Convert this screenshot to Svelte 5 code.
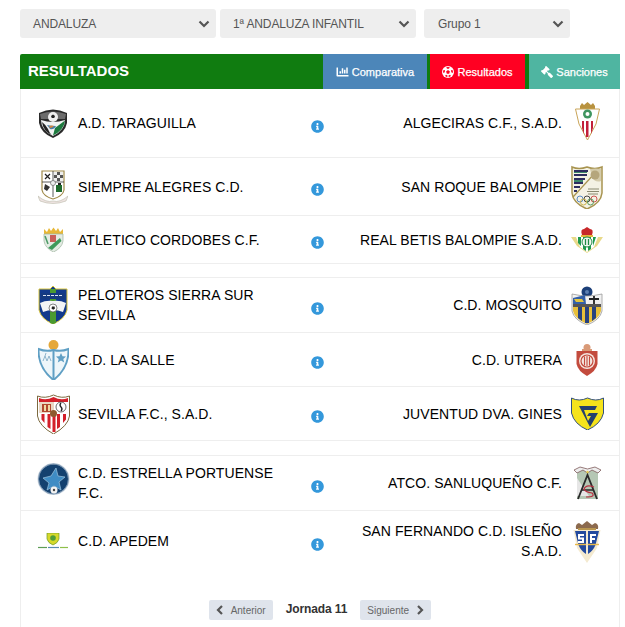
<script>
  const groups = [
    {
      gap: 14,
      rows: [
        { h: 69, home: 'A.D. TARAGUILLA', homeLogo: 'taraguilla', away: 'ALGECIRAS C.F., S.A.D.', awayLogo: 'algeciras' },
        { h: 58, home: 'SIEMPRE ALEGRES C.D.', homeLogo: 'siempre', away: 'SAN ROQUE BALOMPIE', awayLogo: 'sanroque' },
        { h: 48, home: 'ATLETICO CORDOBES C.F.', homeLogo: 'cordobes', away: 'REAL BETIS BALOMPIE S.A.D.', awayLogo: 'betis' }
      ]
    },
    {
      gap: 15,
      rows: [
        { h: 55, home: 'PELOTEROS SIERRA SUR SEVILLA', homeLogo: 'peloteros', away: 'C.D. MOSQUITO', awayLogo: 'mosquito' },
        { h: 54, home: 'C.D. LA SALLE', homeLogo: 'lasalle', away: 'C.D. UTRERA', awayLogo: 'utrera' },
        { h: 54, home: 'SEVILLA F.C., S.A.D.', homeLogo: 'sevilla', away: 'JUVENTUD DVA. GINES', awayLogo: 'gines' }
      ]
    },
    {
      gap: 0,
      rows: [
        { h: 55, home: 'C.D. ESTRELLA PORTUENSE F.C.', homeLogo: 'estrella', away: 'ATCO. SANLUQUEÑO C.F.', awayLogo: 'sanluqueno' },
        { h: 60, last: true, home: 'C.D. APEDEM', homeLogo: 'apedem', away: 'SAN FERNANDO C.D. ISLEÑO S.A.D.', awayLogo: 'sanfernando' }
      ]
    }
  ];
</script>

{#snippet logo(id)}
  {#if id === 'taraguilla'}
    <svg width="30" height="30" viewBox="0 0 30 30">
      <path d="M1 5 Q15 -2 29 5 V15 Q27 25 15 30 Q3 25 1 15Z" fill="#2a2a2a"/>
      <path d="M2 6 Q15 1 28 6 L27 11 H3Z" fill="#6c6c6c"/>
      <circle cx="15" cy="9" r="5" fill="#efefef"/>
      <path d="M13 8l2-1.500 2 1.500-.8 2h-2.400z" fill="#222"/>
      <path d="M3 12 Q15 16 27 12 Q27 22 15 28 Q3 22 3 12Z" fill="#f1f3f3"/>
      <path d="M15 27.500 Q26 22 27 12.500 L17 20Z" fill="#1c7a3e"/>
      <path d="M4 14 Q8 17 10 21 Q12 26 14 27 Q5 23 4 14Z" fill="#222"/>
      <path d="M9 17 Q13 18 18 18 Q16 22 12 21Z" fill="#4a7fa8"/>
      <path d="M11 18 Q14 17 16 18 Q14 20 12 20Z" fill="#d2823e"/>
    </svg>
  {:else if id === 'algeciras'}
    <svg class="up2" width="25" height="38" viewBox="0 0 25 38">
      <path d="M5 4 L7 1 9 3 12.500 0 16 3 18 1 20 4 V7 H5Z" fill="#b8923f"/>
      <path d="M0.500 7 H24.500 L21 22 12.500 38 4 22Z" fill="#fff" stroke="#c9a458"/>
      <circle cx="12.500" cy="12" r="4.500" fill="#3f9560"/>
      <circle cx="12.500" cy="12" r="2" fill="#fff"/>
      <path d="M5 19 H20 L19 24 12.500 36 6 24Z" fill="#fff"/>
      <path d="M7 19h2v13l-2-6zM11 19h2.500v16H11zM16 19h2v7l-2 6z" fill="#c2203a"/>
    </svg>
  {:else if id === 'siempre'}
    <svg width="30" height="34" viewBox="0 0 30 34">
      <path d="M4 1H26V20Q25 26 15 29Q5 26 4 20Z" fill="#fff" stroke="#a08a4a" stroke-width="1.200"/>
      <path d="M15 1V27M4 12H26" stroke="#333" stroke-width=".8"/>
      <path d="M7 4l5 5M12 4l-5 5" stroke="#222" stroke-width="1.200"/>
      <path d="M16 2h9v9h-9z" fill="#555"/>
      <path d="M16 2h3v3h-3zM22 2h3v3h-3zM19 5h3v3h-3zM16 8h3v3h-3zM22 8h3v3h-3z" fill="#eee"/>
      <path d="M7 14l5 3-3 4-3-2z" fill="#333"/>
      <path d="M18 15h6v7h-6z" fill="#1f6b2e"/>
      <path d="M20 13h3v2h-3z" fill="#222"/>
      <circle cx="15" cy="13" r="2.500" fill="#eee" stroke="#555" stroke-width=".6"/>
      <path d="M0 26Q8 33 15 31Q22 33 30 26L28 31Q15 36 2 31Z" fill="#efe4e2" stroke="#bba" stroke-width=".6"/>
    </svg>
  {:else if id === 'sanroque'}
    <svg width="32" height="44" viewBox="0 0 32 44">
      <path d="M1 2 Q8 5 16 2 Q24 5 31 2 V28 Q30 38 16 44 Q2 38 1 28Z" fill="#f4f2e4" stroke="#a89450" stroke-width="1.500"/>
      <path d="M3 5h14v2H3zM3 9h13v2H3zM3 13h11v2H3zM3 17h9v2H3zM3 21h6v2H3zM3 25h3v2H3z" fill="#2d2d5f"/>
      <path d="M3 7h13v1H3zM3 15h9v2H3z" fill="#3f8a6a"/>
      <path d="M2 32 L24 8" stroke="#a89450" stroke-width="1.200"/>
      <path d="M19 4Q25 3 30 4V16Q24 18 21 12Z" fill="#d4cbab"/>
      <circle cx="24" cy="10" r="4.500" fill="#b5a67c"/>
      <g fill="none" stroke-width=".9">
        <circle cx="9" cy="34" r="3" stroke="#4a7fc0"/>
        <circle cx="16" cy="34" r="3" stroke="#333"/>
        <circle cx="23" cy="34" r="3" stroke="#c44"/>
        <circle cx="12.500" cy="37" r="3" stroke="#c9b040"/>
        <circle cx="19.500" cy="37" r="3" stroke="#4a9050"/>
      </g>
      <path d="M17 24h11M16 26.500h12M17 29h10" stroke="#8a8a70" stroke-width="1"/>
    </svg>
  {:else if id === 'cordobes'}
    <svg width="21" height="25" viewBox="0 0 21 25">
      <path d="M1 7 L1 2 4 5 6 1 8 4 10.500 0.500 13 4 15 1 17 5 20 2 20 7Z" fill="#e8b838"/>
      <path d="M1 7H20V14Q19 21 10.500 25Q2 21 1 14Z" fill="#e4ece4" stroke="#9db39d" stroke-width=".7"/>
      <path d="M7 8h6v7H7z" fill="#c9605a"/>
      <path d="M5 21L17 11l1.500 3L9 23z" fill="#3f9a5b"/>
      <path d="M2 9l3 8" stroke="#4c9b67" stroke-width="1.500"/>
    </svg>
  {:else if id === 'betis'}
    <svg width="32" height="27" viewBox="0 0 32 27">
      <path d="M11 9 Q9 3 13 3 L16 1 19 3 Q23 3 21 9Z" fill="#c8282a"/>
      <path d="M10 9h12v2H10z" fill="#e5b93c"/>
      <path d="M0 11 H32 L26 20 16 27 6 20Z" fill="#e8d98a"/>
      <path d="M5 11 H27 L23 21 16 26 9 21Z" fill="#fff"/>
      <path d="M7 11h3v9l-3-3zM12 11h3v14l-3-2zM17 11h3v12l-3 2zM22 11h3l-3 9z" fill="#1f9a4d"/>
      <circle cx="16" cy="16" r="5" fill="#f4f8f2" stroke="#1f8a45"/>
      <path d="M14.500 13v6M17.500 13v6" stroke="#1f8a45" stroke-width="1.300"/>
    </svg>
  {:else if id === 'peloteros'}
    <svg width="30" height="38" viewBox="0 0 30 38">
      <path d="M1 3 L12 3 15 0 18 3 H29V24Q27 33 15 38Q3 33 1 24Z" fill="#123a8c" stroke="#d8c43c"/>
      <path d="M12 3H18V37L15 38 12 37Z" fill="#4a9a30"/>
      <path d="M3 7h24v6H3z" fill="#153a80"/>
      <path d="M5 9.500h20" stroke="#dfe6f2" stroke-width="1.200" stroke-dasharray="3 1"/>
      <path d="M2 17Q8 14 15 15Q22 14 28 17L25 26Q15 22 5 26Z" fill="#f2f4f6"/>
      <circle cx="15" cy="22" r="4" fill="#fff" stroke="#333" stroke-width=".6"/>
      <path d="M14 20.500h2.500l.500 2-1.800 1.300-1.700-1.300z" fill="#222"/>
    </svg>
  {:else if id === 'mosquito'}
    <svg width="32" height="39" viewBox="0 0 32 39">
      <circle cx="16" cy="6" r="5.500" fill="#1c3f78"/>
      <circle cx="16" cy="6" r="2" fill="#5c7fb0"/>
      <path d="M1 8Q10 10 16 10Q22 10 31 8V25Q29 34 16 39Q3 34 1 25Z" fill="#f2f2f2" stroke="#999" stroke-width=".8"/>
      <path d="M2 12L14 9 15 18H2Z" fill="#3460a8"/>
      <path d="M3 13h8l2 3H5z" fill="#e3c640"/>
      <path d="M17 12 H30 V18 H17Z" fill="#eee"/>
      <path d="M23 10v9M18 13h10" stroke="#222" stroke-width="1.800"/>
      <path d="M2 18h28v3H2z" fill="#555"/>
      <path d="M2 21H30V25Q28 33 16 38Q4 33 2 25Z" fill="#e7bf3a"/>
      <path d="M7 21h4v14l-4-3zM14 21h4v16h-4zM21 21h4v11l-4 3z" fill="#27417e"/>
    </svg>
  {:else if id === 'lasalle'}
    <svg width="31" height="40" viewBox="0 0 31 40">
      <circle cx="15.500" cy="5" r="5" fill="#e5a83a"/>
      <path d="M0.500 9 Q8 12 15.500 10 Q23 12 30.500 9 Q31 28 15.500 40 Q0 28 0.500 9Z" fill="#eef6fa" stroke="#5f9fc4" stroke-width="2"/>
      <path d="M15.500 10V39" stroke="#5f9fc4" stroke-width="2"/>
      <path d="M23 13l1.500 3.300 3.500.300-2.700 2.300.9 3.500-3.200-2-3.200 2 .9-3.500-2.700-2.300 3.500-.300z" fill="#5f9fc4"/>
      <path d="M5 21l2-5 2 5M9 21l2-5 2 5M7 16l1 -3" fill="none" stroke="#85aec6" stroke-width=".9"/>
    </svg>
  {:else if id === 'utrera'}
    <svg width="22" height="32" viewBox="0 0 22 32">
      <circle cx="11" cy="3.500" r="3.500" fill="#d99a78"/>
      <path d="M6 5h10v3H6z" fill="#d99a78"/>
      <path d="M0.500 7H21.500V20Q20 27 11 32Q2 27 .5 20Z" fill="#c34b3d"/>
      <circle cx="11" cy="17" r="8" fill="#f5e6df"/>
      <circle cx="11" cy="17" r="6" fill="none" stroke="#c34b3d" stroke-width="1.200"/>
      <path d="M8.500 12.500v9M11 12v10M13.500 12.500v9" stroke="#c34b3d" stroke-width="1.100"/>
    </svg>
  {:else if id === 'sevilla'}
    <svg width="33" height="40" viewBox="0 0 33 40">
      <path d="M0.500 2Q8 5 16.500 1Q25 5 32.500 2V22Q31 32 16.500 40Q2 32 0.500 22Z" fill="#fff" stroke="#7c6a3f"/>
      <path d="M2 4Q9 7 16.500 3Q24 7 31 4V8H2Z" fill="#d3202a"/>
      <path d="M2 8H17V19H2Z" fill="#e9d7c4"/>
      <path d="M5 10h9v8H5z" fill="#b1482f"/>
      <path d="M7 11h2v6H7zM11 11h2v6h-2z" fill="#f0d9a6"/>
      <circle cx="24" cy="13" r="5" fill="#fff" stroke="#444" stroke-width=".8"/>
      <path d="M24 9q-2 2 0 4t0 4" fill="none" stroke="#222" stroke-width="1.300"/>
      <path d="M3 20H30V23Q29 31 16.500 38Q4 31 3 23Z" fill="#fff"/>
      <path d="M4.500 20h3v9l-3-3.500zM10.500 20h3v15l-3-2zM15.500 20h3v18h-3zM20 20h3v13l-3 2zM26 20h3v5.500l-3 3.500z" fill="#d3202a"/>
      <circle cx="16.500" cy="19.500" r="3.500" fill="#8e5a2e"/>
    </svg>
  {:else if id === 'gines'}
    <svg width="33" height="33" viewBox="0 0 33 33">
      <path d="M0.500 1 Q8 5 16.500 1 Q25 5 32.500 1 V16 Q30 27 16.500 33 Q3 27 .5 16Z" fill="#f5e31b" stroke="#33507c" stroke-width="1"/>
      <path d="M8 9H26L24 13H13L17 24 20 19H16L18 16H27L19 30Z" fill="#24406e"/>
    </svg>
  {:else if id === 'estrella'}
    <svg class="up4" width="33" height="32" viewBox="0 0 33 32">
      <circle cx="16.500" cy="16" r="16" fill="#c9d4df"/>
      <circle cx="16.500" cy="16" r="14.500" fill="#14416f"/>
      <circle cx="16.500" cy="16" r="15" fill="none" stroke="#5f7f9f" stroke-width=".8"/>
      <path d="M19 5l2 8 7 1-6 5 2 8-7-4-7 4 2-7-6-5 8-2z" fill="#3f8cc4" stroke="#9fc6e0" stroke-width=".7"/>
      <circle cx="17" cy="27" r="3.500" fill="#f2f2f2"/>
      <circle cx="17" cy="27" r="1.200" fill="#444"/>
    </svg>
  {:else if id === 'sanluqueno'}
    <svg width="29" height="34" viewBox="0 0 29 34">
      <path d="M4 3H25V33H4Z" fill="#b5c7b4"/>
      <path d="M1 4L7 1 14.500 3 22 1 28 4 25 7 19 4 14.500 7 10 4 4 7Z" fill="#eee" stroke="#7e5a5a" stroke-width=".8"/>
      <path d="M4 12L16 30H4Z" fill="#e6e6e6"/>
      <path d="M5 33L14.500 9 24 33" fill="none" stroke="#2a2a2a" stroke-width="1.800"/>
      <path d="M9 24H20" stroke="#2a2a2a" stroke-width="1.500"/>
      <path d="M21 21Q13 18 11 23Q12 26 19 27Q23 31 13 31" fill="none" stroke="#b73040" stroke-width="1.200"/>
      <circle cx="14.500" cy="6" r="1.200" fill="#e9cf50"/>
    </svg>
  {:else if id === 'apedem'}
    <svg width="30" height="16" viewBox="0 0 30 16">
      <path d="M9 0H21V6Q20 10 15 12Q10 10 9 6Z" fill="#d6d92b" stroke="#6f9a2a" stroke-width=".7"/>
      <circle cx="15" cy="5" r="2.800" fill="#4f9d3a"/>
      <path d="M0 14.500H9" stroke="#5d9d55" stroke-width="1.200"/>
      <path d="M10 14.500H21" stroke="#5a8ab0" stroke-width="1.200"/>
      <path d="M22 14.500H30" stroke="#8fc04a" stroke-width="1.200"/>
    </svg>
  {:else if id === 'sanfernando'}
    <svg width="28" height="43" viewBox="0 0 28 43">
      <path d="M3 9Q2 4 6 3L9 5 14 1 19 5 22 3Q26 4 25 9Z" fill="#8c6a4e"/>
      <path d="M5 8h18v3H5z" fill="#b8964f"/>
      <path d="M0.500 10H27.500L24 28 14 43 4 28Z" fill="#f4ead0"/>
      <path d="M2 11H13V25H5.500ZM15 11H26L22.500 25H15Z" fill="#234a9e"/>
      <path d="M5.500 25H13V34Q8 31 5.500 25ZM15 25H22.500Q20 31 15 34Z" fill="#234a9e"/>
      <path d="M5 14h6v2H7v1.500h4V23H5v-2h4v-1.500H5zM17 14h6v2h-4v2h3v2h-3v3h-2z" fill="#fff"/>
      <path d="M2 24.500H26" stroke="#e8b94c" stroke-width="1.400"/>
      <path d="M14 11V40" stroke="#f4ead0" stroke-width="1.500"/>
    </svg>
  {/if}
{/snippet}

{#snippet info()}
  <svg class="info" viewBox="0 0 512 512" width="13" height="13" aria-hidden="true">
    <path fill="#3498db" d="M256 8C119.043 8 8 119.083 8 256c0 136.997 111.043 248 248 248s248-111.003 248-248C504 119.083 392.957 8 256 8zm0 110c23.196 0 42 18.804 42 42s-18.804 42-42 42-42-18.804-42-42 18.804-42 42-42zm56 254c0 6.627-5.373 12-12 12h-88c-6.627 0-12-5.373-12-12v-24c0-6.627 5.373-12 12-12h12v-64h-12c-6.627 0-12-5.373-12-12v-24c0-6.627 5.373-12 12-12h64c6.627 0 12 5.373 12 12v100h12c6.627 0 12 5.373 12 12v24z"/>
  </svg>
{/snippet}

{#snippet chev()}
  <svg width="12" height="8" viewBox="0 0 12 8" aria-hidden="true"><path d="M1.500 1.500 6 6l4.500-4.500" fill="none" stroke="#555" stroke-width="2.200"/></svg>
{/snippet}

<main class="page">
  <div class="filters">
    <div class="select wide"><span>ANDALUZA</span>{@render chev()}</div>
    <div class="select wide"><span>1ª ANDALUZA INFANTIL</span>{@render chev()}</div>
    <div class="select narrow"><span>Grupo 1</span>{@render chev()}</div>
  </div>

  <header class="bar">
    <h1>RESULTADOS</h1>
    <nav class="tabs">
      <a class="tab blue">
        <svg width="13" height="12" viewBox="0 0 512 512"><path fill="#fff" d="M332.800 320h38.400c6.400 0 12.800-6.400 12.800-12.800V172.800c0-6.400-6.400-12.800-12.800-12.800h-38.400c-6.400 0-12.800 6.400-12.800 12.800v134.400c0 6.400 6.400 12.800 12.800 12.800zm96 0h38.400c6.400 0 12.800-6.400 12.800-12.800V76.800c0-6.400-6.400-12.800-12.800-12.800h-38.400c-6.400 0-12.800 6.400-12.800 12.800v230.400c0 6.400 6.400 12.800 12.800 12.800zm-288 0h38.400c6.400 0 12.800-6.400 12.800-12.800v-70.400c0-6.400-6.400-12.800-12.800-12.800h-38.400c-6.400 0-12.800 6.400-12.800 12.800v70.400c0 6.400 6.400 12.800 12.800 12.800zm96 0h38.400c6.400 0 12.800-6.400 12.800-12.800V108.800c0-6.400-6.400-12.800-12.800-12.800h-38.400c-6.400 0-12.800 6.400-12.800 12.800v198.400c0 6.400 6.400 12.800 12.800 12.800zM496 384H64V80c0-8.840-7.160-16-16-16H16C7.160 64 0 71.160 0 80v336c0 17.670 14.330 32 32 32h464c8.840 0 16-7.160 16-16v-32c0-8.840-7.160-16-16-16z"/></svg>
        Comparativa
      </a>
      <a class="tab red">
        <svg width="12" height="12" viewBox="0 0 24 24"><circle cx="12" cy="12" r="12" fill="#fff"/><path fill="#ff0022" d="M12 8l3.800 2.800-1.500 4.500H9.700l-1.500-4.500zM12 1.500 8 3.500l4 2.500 4-2.500zM2 9l.5 5 3-1.500L6 8zM22 9l-.5 5-3-1.500L18 8zM6 20l4.500 2.500.5-3.500-3-1.500zM18 20l-4.500 2.500L13 19l3-1.500z"/></svg>
        Resultados
      </a>
      <a class="tab teal">
        <svg class="flip" width="12" height="12" viewBox="0 0 512 512"><path fill="#fff" d="M504.971 199.362l-22.627-22.627c-9.373-9.373-24.569-9.373-33.941 0l-5.657 5.657L329.608 69.255l5.657-5.657c9.373-9.373 9.373-24.569 0-33.941L312.638 7.029c-9.373-9.373-24.569-9.373-33.941 0L154.246 131.480c-9.373 9.373-9.373 24.569 0 33.941l22.627 22.627c9.373 9.373 24.569 9.373 33.941 0l5.657-5.657 39.598 39.598-81.040 81.040-5.657-5.657c-12.497-12.497-32.758-12.497-45.255 0L9.373 412.118c-12.497 12.497-12.497 32.758 0 45.255l45.255 45.255c12.497 12.497 32.758 12.497 45.255 0l114.745-114.745c12.497-12.497 12.497-32.758 0-45.255l-5.657-5.657 81.040-81.040 39.598 39.598-5.657 5.657c-9.373 9.373-9.373 24.569 0 33.941l22.627 22.627c9.373 9.373 24.569 9.373 33.941 0l124.451-124.451c9.372-9.372 9.372-24.568 0-33.941z"/></svg>
        Sanciones
      </a>
    </nav>
  </header>

  <section class="card">
    {#each groups as group}
      {#each group.rows as m}
        <div class="row" class:last={m.last} style="height:{m.h}px">
          <div class="team home">
            <div class="logo">{@render logo(m.homeLogo)}</div>
            <span class="name">{m.home}</span>
          </div>
          <div class="mid">{@render info()}</div>
          <div class="team away">
            <span class="name">{m.away}</span>
            <div class="logo">{@render logo(m.awayLogo)}</div>
          </div>
        </div>
      {/each}
      {#if group.gap}
        <div class="spacer" style="height:{group.gap}px"></div>
      {/if}
    {/each}

    <div class="pager">
      <button class="pg prev">
        <svg width="8" height="10" viewBox="0 0 8 10"><path d="M6 1 2 5l4 4" fill="none" stroke="#555" stroke-width="2.200"/></svg>
        Anterior
      </button>
      <strong>Jornada 11</strong>
      <button class="pg next">
        Siguiente
        <svg width="8" height="10" viewBox="0 0 8 10"><path d="M2 1l4 4-4 4" fill="none" stroke="#555" stroke-width="2.200"/></svg>
      </button>
    </div>
  </section>
</main>

<style>
  :global(html), :global(body) {
    margin: 0;
    height: 100%;
    overflow: hidden;
    background: #fff;
  }
  .page {
    padding: 9px 5px 0 20px;
    font-family: "Liberation Sans", Arial, sans-serif;
    color: #000;
  }
  .filters {
    display: flex;
    height: 29px;
    margin-bottom: 16px;
  }
  .select {
    display: flex;
    align-items: center;
    justify-content: space-between;
    box-sizing: border-box;
    background: #eee;
    border-radius: 3px;
    color: #555;
    font-size: 12px;
    letter-spacing: -0.12px;
    padding: 0 6px 0 13px;
  }
  .wide { width: 196px; margin-right: 4px; }
  .narrow { width: 146px; margin-left: 4px; padding-left: 14px; }
  .bar {
    display: flex;
    height: 35px;
    background: #107c10;
    border-radius: 2px 2px 0 0;
  }
  h1 {
    flex: 1;
    margin: 0;
    padding-left: 8px;
    color: #fff;
    font-size: 15px;
    font-weight: 700;
    line-height: 34px;
  }
  .tabs { display: flex; }
  .tab {
    display: flex;
    align-items: center;
    justify-content: center;
    gap: 3px;
    color: #fff;
    font-size: 11px;
    -webkit-text-stroke: 0.25px #fff;
  }
  .flip { transform: scaleX(-1); }
  .blue { width: 104px; background: #4c86b9; }
  .red { width: 95px; margin-left: 3px; background: #ff0022; }
  .teal { width: 91px; margin-left: 4px; background: #4fb5a1; }
  .card {
    height: 560px;
    border: 1px solid #eee;
    border-width: 0 1px;
  }
  .row {
    display: grid;
    grid-template-columns: 279px 34px 1fr;
    box-sizing: border-box;
    border-bottom: 1px solid #eee;
  }
  .row.last { border-bottom: 0; }
  .spacer {
    box-sizing: border-box;
    border-bottom: 1px solid #eee;
  }
  .team {
    display: flex;
    align-items: center;
    gap: 8px;
    font-size: 14px;
    letter-spacing: 0.07px;
    line-height: 20px;
    min-width: 0;
  }
  .home { padding: 0 10px 0 15px; }
  .away { padding: 0 15px 0 0; justify-content: flex-end; text-align: right; }
  .logo {
    flex: none;
    width: 34px;
    display: flex;
    justify-content: center;
  }
  .logo svg { display: block; }
  .logo svg.up2 { margin-bottom: 4px; }
  .logo svg.up4 { margin-bottom: 8px; }
  .mid {
    display: flex;
    align-items: center;
    justify-content: center;
    padding-top: 6px;
  }
  .info { display: block; }
  .pager {
    display: flex;
    justify-content: center;
    align-items: flex-start;
    gap: 13px;
    padding-top: 29px;
  }
  .pager strong {
    font-size: 12px;
    letter-spacing: -0.1px;
    color: #333;
    line-height: 18px;
  }
  .pg {
    display: flex;
    align-items: center;
    height: 20px;
    border: 0;
    border-radius: 2px;
    background: #dfe4ec;
    color: #666;
    font: 10px "Liberation Sans", Arial, sans-serif;
  }
  .prev { width: 64px; padding: 0 7px; gap: 7px; }
  .next { width: 71px; padding: 0 7px; gap: 7px; }
</style>
